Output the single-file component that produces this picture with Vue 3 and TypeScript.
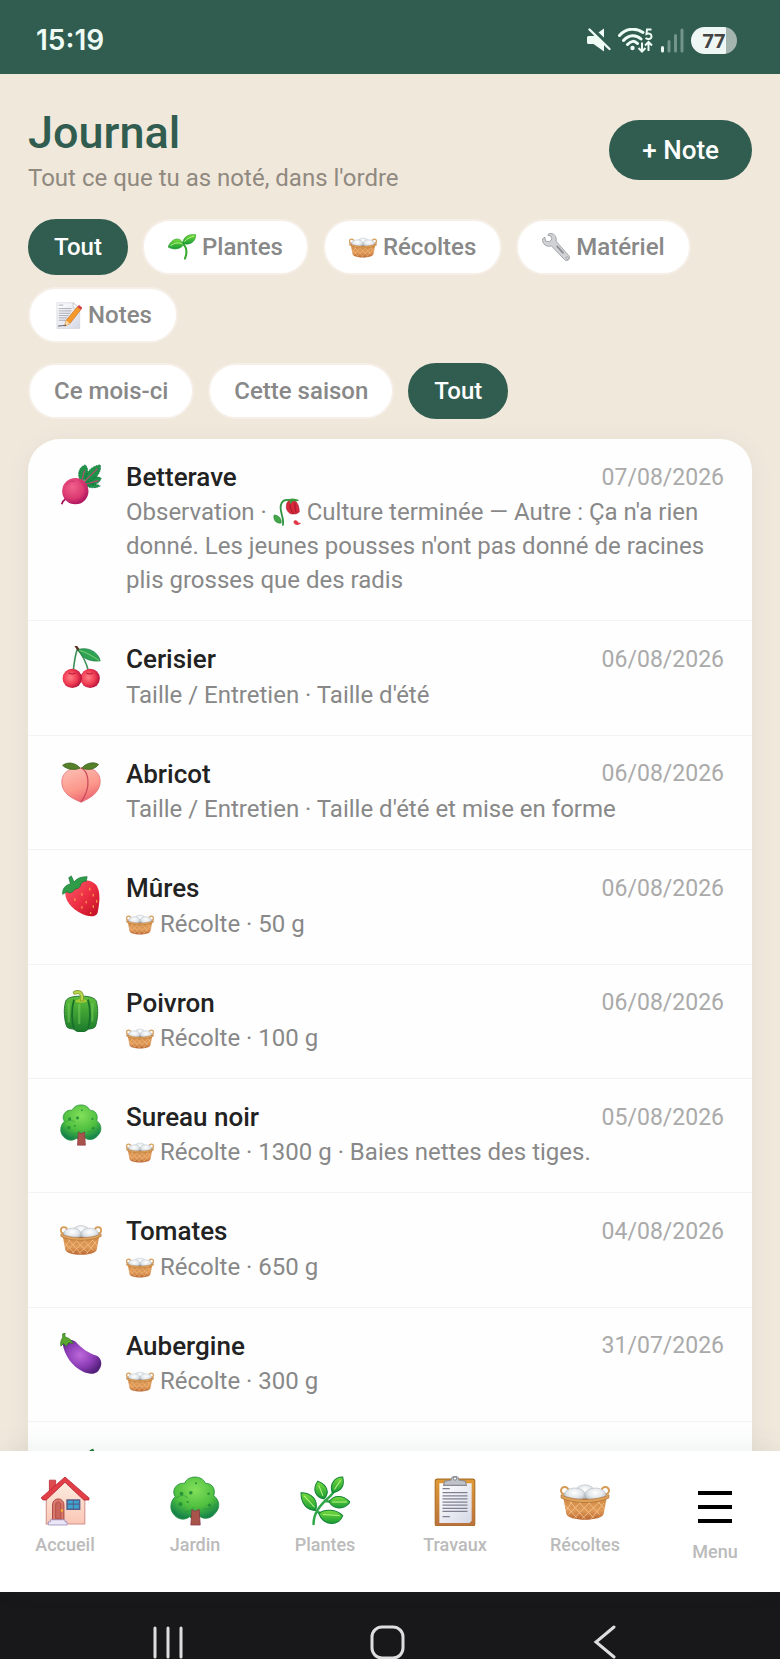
<script setup lang="ts">
import { ref } from 'vue'

interface Choice {
  id: string
  label: string
  icon?: string
}

interface Entry {
  icon: string
  name: string
  date: string
  before?: string
  inline?: string
  text: string
}

const kinds: Choice[] = [
  { id: 'all', label: 'Tout' },
  { id: 'plants', label: 'Plantes', icon: 'seedling' },
  { id: 'harvests', label: 'Récoltes', icon: 'basket' },
  { id: 'gear', label: 'Matériel', icon: 'wrench' },
  { id: 'notes', label: 'Notes', icon: 'memo' },
]

const periods: Choice[] = [
  { id: 'month', label: 'Ce mois-ci' },
  { id: 'season', label: 'Cette saison' },
  { id: 'all', label: 'Tout' },
]

const entries: Entry[] = [
  {
    icon: 'beet',
    name: 'Betterave',
    date: '07/08/2026',
    before: 'Observation · ',
    inline: 'rose',
    text: "Culture terminée — Autre : Ça n'a rien donné. Les jeunes pousses n'ont pas donné de racines plis grosses que des radis",
  },
  { icon: 'cherries', name: 'Cerisier', date: '06/08/2026', text: "Taille / Entretien · Taille d'été" },
  { icon: 'peach', name: 'Abricot', date: '06/08/2026', text: "Taille / Entretien · Taille d'été et mise en forme" },
  { icon: 'strawberry', name: 'Mûres', date: '06/08/2026', inline: 'basket', text: 'Récolte · 50 g' },
  { icon: 'pepper', name: 'Poivron', date: '06/08/2026', inline: 'basket', text: 'Récolte · 100 g' },
  { icon: 'tree', name: 'Sureau noir', date: '05/08/2026', inline: 'basket', text: 'Récolte · 1300 g · Baies nettes des tiges.' },
  { icon: 'basket', name: 'Tomates', date: '04/08/2026', inline: 'basket', text: 'Récolte · 650 g' },
  { icon: 'eggplant', name: 'Aubergine', date: '31/07/2026', inline: 'basket', text: 'Récolte · 300 g' },
]

const tabs: Choice[] = [
  { id: 'home', label: 'Accueil', icon: 'house' },
  { id: 'garden', label: 'Jardin', icon: 'tree' },
  { id: 'plants', label: 'Plantes', icon: 'herb' },
  { id: 'tasks', label: 'Travaux', icon: 'clipboard' },
  { id: 'harvests', label: 'Récoltes', icon: 'basket' },
]

const kind = ref('all')
const period = ref('all')
</script>

<template>
  <div class="screen">
    <svg class="sprite" aria-hidden="true">
      <defs>
        <radialGradient id="g-beet" cx=".4" cy=".35" r=".7"><stop offset="0" stop-color="#f0628c" /><stop offset=".6" stop-color="#dc3a72" /><stop offset="1" stop-color="#a80f5c" /></radialGradient>
        <radialGradient id="g-cherry" cx=".4" cy=".45" r=".6"><stop offset="0" stop-color="#ff7f85" /><stop offset=".6" stop-color="#f03c52" /><stop offset="1" stop-color="#b5123c" /></radialGradient>
        <linearGradient id="g-peach" x1="0" y1="0" x2=".4" y2="1"><stop offset="0" stop-color="#ffc3b8" /><stop offset=".7" stop-color="#fb9689" /><stop offset="1" stop-color="#ee6c74" /></linearGradient>
        <linearGradient id="g-straw" x1="0" y1="0" x2="1" y2="1"><stop offset="0" stop-color="#fb5d6c" /><stop offset=".5" stop-color="#ee3044" /><stop offset="1" stop-color="#bf0c22" /></linearGradient>
        <linearGradient id="g-pepper" x1="0" y1="0" x2="0" y2="1"><stop offset="0" stop-color="#5fc03c" /><stop offset="1" stop-color="#1a7a2c" /></linearGradient>
        <radialGradient id="g-tree" cx=".5" cy=".3" r=".7"><stop offset="0" stop-color="#83e05a" /><stop offset=".6" stop-color="#4fbf40" /><stop offset="1" stop-color="#15834a" /></radialGradient>
        <linearGradient id="g-wicker" x1="0" y1="0" x2="0" y2="1"><stop offset="0" stop-color="#cf8a45" /><stop offset=".6" stop-color="#e09a58" /><stop offset="1" stop-color="#b86732" /></linearGradient>
        <radialGradient id="g-egg" cx=".5" cy=".35" r=".7"><stop offset="0" stop-color="#ffffff" /><stop offset=".5" stop-color="#e3e8ec" /><stop offset="1" stop-color="#a5adb5" /></radialGradient>
        <radialGradient id="g-egpl" cx=".45" cy=".45" r=".6"><stop offset="0" stop-color="#bd69dc" /><stop offset=".6" stop-color="#8b3cb4" /><stop offset="1" stop-color="#54217c" /></radialGradient>
        <linearGradient id="g-leaf" x1="0" y1="0" x2="0" y2="1"><stop offset="0" stop-color="#78dc3c" /><stop offset="1" stop-color="#179b35" /></linearGradient>
        <linearGradient id="g-wall" x1="0" y1="0" x2="0" y2="1"><stop offset="0" stop-color="#fdeee0" /><stop offset="1" stop-color="#fbc6b5" /></linearGradient>
        <linearGradient id="g-board" x1="0" y1="0" x2="0" y2="1"><stop offset="0" stop-color="#e09a35" /><stop offset="1" stop-color="#b9713f" /></linearGradient>
        <linearGradient id="g-paper" x1="0" y1="0" x2="1" y2="1"><stop offset="0" stop-color="#ffffff" /><stop offset="1" stop-color="#d5d9e6" /></linearGradient>
      </defs>

      <symbol id="i-beet" viewBox="0 0 48 48">
        <path d="M9 37c-1 4-6 3-7 9" fill="none" stroke="#a3145c" stroke-width="2" />
        <path d="M24 20C19 13 21 3 29 1c5 5 2 13-3 19zM28 21C28 10 36 2 46 1c2 8-5 17-16 21zM29 23c5-8 12-10 18-7-1 6-9 10-18 7zM28 24c7-3 15-1 18 1-5 3-13 3-18-1z" fill="#1f9449" stroke="#0c6a3b" stroke-width=".8" stroke-dasharray="2 1" />
        <path d="M24 23L28 7M25 23L43 5M26 24l18-5" fill="none" stroke="#b64a72" stroke-width="1.400" />
        <circle cx="17.500" cy="31" r="15" fill="url(#g-beet)" />
        <path d="M22 19c4 2 7 7 7 12M7 24c3-4 6-5 10-4M25 40c2-1 4-4 5-7" fill="none" stroke="#b31b62" stroke-width=".8" opacity=".7" />
      </symbol>

      <symbol id="i-cherries" viewBox="0 0 48 48">
        <path d="M20 3C17 11 16 20 15 30M20 4c6 6 10 15 13 26" fill="none" stroke="#3c8f55" stroke-width="1.800" />
        <path d="M18 0l3 4" stroke="#5d2f20" stroke-width="2.600" stroke-linecap="round" />
        <path d="M21 4c9-3 22 1 25 13-10 1-20-1-25-13z" fill="#2fa352" stroke="#167542" stroke-width=".8" />
        <path d="M22 5c7 2 15 6 23 12" stroke="#8bd27a" stroke-width="1" fill="none" />
        <circle cx="34.500" cy="37" r="11" fill="url(#g-cherry)" />
        <circle cx="14" cy="37" r="11" fill="url(#g-cherry)" />
        <path d="M10 31q4 2 8 0M30 31q4 2 8 0" stroke="#a81035" fill="none" />
      </symbol>

      <symbol id="i-peach" viewBox="0 0 48 48">
        <path d="M24 8C16 6 2 11 2 24c0 13 12 19 22 23 12-5 22-12 22-24C46 10 32 6 24 8z" fill="url(#g-peach)" stroke="#df6770" stroke-width=".8" />
        <path d="M24 8c8 3 13 21 0 39" fill="none" stroke="#ca4b5d" stroke-width="1.500" />
        <path d="M23 8C17 1 8 1 3 5c5 5 14 6 20 3zM25 8c6-7 15-7 19-4-4 6-13 7-19 4z" fill="#54802a" stroke="#335d1b" stroke-width=".8" />
      </symbol>

      <symbol id="i-strawberry" viewBox="0 0 48 48">
        <path d="M6 21C10 10 26 3 37 8c10 5 9 20 6 35-2 5-8 5-14 3C18 42 6 32 6 21z" fill="url(#g-straw)" />
        <path d="M10 3l3-2 3 7c4-5 9-6 15-6l-1 5c-3 0-5 1-6 3-1 4-3 6-7 6-3 5-6 5-9 3l-5 3c0-6 2-10 9-12z" fill="#2f9c47" stroke="#177338" stroke-width=".8" />
        <path d="M34 15v2M25 21v2M38 22v2M17 27v2M30 30v2M38 35v2M25 36v2M35 43v1M42 29v2" stroke="#ff9d4f" stroke-width="1.400" stroke-linecap="round" />
      </symbol>

      <symbol id="i-pepper" viewBox="0 0 48 48">
        <path d="M6 15c0-6 8-8 18-8s18 2 18 8c2 8 1 18-1 25-1 5-7 4-9 5-4 4-12 4-16 0-2-1-8 0-9-5C5 33 4 23 6 15z" fill="url(#g-pepper)" stroke="#176829" stroke-width="1" />
        <path d="M16 11c-3 10-3 24 0 33M32 11c3 10 3 24 0 33" stroke="#186f2a" stroke-width="2" fill="none" />
        <path d="M10 16v20M22 17v21M37 16v19" stroke="#8be267" stroke-width="2.500" stroke-linecap="round" opacity=".4" />
        <path d="M17 13c4 2 10 2 14 0-2-4-10-4-14 0z" fill="#a4c936" />
        <path d="M25 11c1-7-2-10-8-8" fill="none" stroke="#7d9d27" stroke-width="4.500" stroke-linecap="round" />
        <path d="M25 11c1-7-2-10-8-8" fill="none" stroke="#bbd651" stroke-width="2.500" stroke-linecap="round" />
      </symbol>

      <symbol id="i-tree" viewBox="0 0 48 48">
        <path d="M14 7C17-1 31-1 34 7c7 0 10 6 8 12 6 4 6 12 2 16-4 6-11 7-15 4-4 3-8 3-10 0-5 4-12 3-16-3-4-5-2-13 2-16C1 14 6 6 14 7z" fill="url(#g-tree)" stroke="#248f3e" stroke-width=".8" />
        <path d="M20 47l1-15 3 2 4-2 1 15z" fill="#a9544b" stroke="#8a3a48" stroke-width=".8" />
        <path d="M6 21c4-3 8-3 11 0M32 31c5 2 9 0 12-4M14 34c4 1 7-1 9-4" fill="none" stroke="#24943b" opacity=".55" />
        <g fill="#279339"><circle cx="11" cy="17" r="1.800" /><circle cx="20" cy="16" r="1.700" /><circle cx="10" cy="27" r="2" /><circle cx="37" cy="17" r="1.200" /><circle cx="38" cy="28" r="1.700" /><circle cx="25" cy="7" r="1" /><circle cx="17" cy="25" r="1" /></g>
      </symbol>

      <symbol id="i-basket" viewBox="0 0 48 48">
        <circle cx="4.500" cy="14" r="3.500" fill="none" stroke="#d59b55" stroke-width="2" />
        <circle cx="43.500" cy="14" r="3.500" fill="none" stroke="#d59b55" stroke-width="2" />
        <ellipse cx="24" cy="20" rx="21" ry="5" fill="#a5612c" />
        <ellipse cx="24" cy="15" rx="9" ry="6.500" fill="url(#g-egg)" stroke="#a9b1b8" stroke-width=".5" />
        <ellipse cx="14" cy="18" rx="10" ry="6.500" fill="url(#g-egg)" stroke="#a9b1b8" stroke-width=".5" />
        <ellipse cx="34" cy="18" rx="10" ry="6.500" fill="url(#g-egg)" stroke="#a9b1b8" stroke-width=".5" />
        <path d="M3 20c11 5 31 5 42 0l-3 16c-1 8-35 8-36 0z" fill="url(#g-wicker)" />
        <path d="M5 28l11 12M9 24l15 17M18 25l14 15M27 25l11 12M36 24l7 8M42 26L30 41M38 25L21 41M29 25L14 40M20 25L8 37M12 24l-6 9" stroke="#f8c48e" stroke-width=".8" fill="none" />
        <path d="M1 18c11 6 35 6 46 0v3c-11 6-35 6-46 0z" fill="#dfa25c" stroke="#a9682f" stroke-width=".6" />
      </symbol>

      <symbol id="i-eggplant" viewBox="0 0 48 48">
        <path d="M3 12C8 7 14 7 18 10c7 8 15 13 24 16 6 3 7 11 2 17-4 5-12 4-18 1C14 38 5 26 3 12z" fill="url(#g-egpl)" />
        <path d="M3 1l3-1c-1 3 0 4 1 5 4 1 6 3 8 7l-5-1-3 4-3-3-3 3C0 10 2 7 3 5z" fill="#59a52e" stroke="#2f7621" stroke-width=".8" />
      </symbol>

      <symbol id="i-carrot" viewBox="0 0 48 48">
        <path d="M31 17C29 8 33 3 38 2l2 5c4-2 7-1 8 2-1 6-9 9-17 8z" fill="#1d7c32" />
        <path d="M3 46C7 31 15 16 25 12c7-1 14 6 11 13C32 34 18 43 3 46z" fill="#f28b2d" />
      </symbol>

      <symbol id="i-house" viewBox="0 0 48 48">
        <path d="M9 16V4h6v10z" fill="#e04a4c" stroke="#b9323c" stroke-width=".8" />
        <path d="M6 20L24 5l19 16v25H6z" fill="url(#g-wall)" stroke="#cf8f8b" stroke-width="1" />
        <path d="M24 1L1 21l2 2h3L24 6l18 17h5v-2z" fill="#e23e46" stroke="#b82334" stroke-width=".8" stroke-linejoin="round" />
        <path d="M12 42V28c0-8 11-8 11 0v14z" fill="#d8796c" stroke="#9e3b3c" stroke-width=".8" />
        <path d="M15 41V28c0-4 5-4 5 0v13z" fill="#c9655b" stroke="#a8483f" stroke-width=".7" />
        <circle cx="21" cy="33" r="1.200" fill="#f5b928" />
        <path d="M10 42h14v2h2v3H8v-3h2z" fill="#ece7f6" stroke="#9a8ebb" stroke-width=".8" />
        <path d="M26 23h12v9H26z" fill="#3ba5d2" stroke="#565f8a" stroke-width="1.500" />
        <path d="M32 23v9M26 27h12" stroke="#565f8a" stroke-width="1" />
      </symbol>

      <symbol id="i-herb" viewBox="0 0 48 48">
        <path d="M13 46c0-11 7-18 12-23 5-4 8-7 10-13M24 24l9 1M18 35l4 1" fill="none" stroke="#2da747" stroke-width="2.400" stroke-linecap="round" />
        <g fill="url(#g-leaf)" stroke="#14813a" stroke-width="1">
          <path d="M31 16C28 8 33 1 41 1c2 8-1 14-10 15z" />
          <path d="M23 22C14 20 12 12 17 5c9 3 12 11 6 17z" />
          <path d="M15 33C6 33 1 26 1 16c10 0 17 7 14 17z" />
          <path d="M28 25c4-7 13-7 20 0-5 7-15 8-20 0z" />
          <path d="M18 36c6-5 17-4 23 2-3 10-18 11-23-2z" />
        </g>
        <path d="M33 13l6-9M22 19L18 9M14 30L4 19M31 25h14M22 37l16 1" stroke="#b5f584" stroke-width="1" />
      </symbol>

      <symbol id="i-clipboard" viewBox="0 0 48 48">
        <rect x="5" y="3" width="38" height="45" rx="2" fill="url(#g-board)" stroke="#a96b1e" stroke-width="1" />
        <path d="M9 7h31v36l-2 2H9z" fill="url(#g-paper)" />
        <path d="M12 12h7M12 16h24M12 19h24M12 22h24M12 25h24M12 28h24M12 31h24M12 34h24M12 39h7" stroke="#7f8092" stroke-width="1.200" />
        <path d="M13 9l1-4 6-1c1-5 7-5 8 0l6 1 1 4z" fill="#bec1c8" stroke="#888b94" stroke-width="1" />
        <circle cx="24" cy="2.500" r="1.500" fill="#fff" stroke="#888b94" />
      </symbol>

      <symbol id="i-seedling" viewBox="0 0 48 48">
        <path d="M29 44C33 34 32 24 25 18" fill="none" stroke="#37a92d" stroke-width="3.500" stroke-linecap="round" />
        <path d="M27 20C21 5 7 8 0 24c9 5 20 5 27-4z" fill="url(#g-leaf)" stroke="#26932c" />
        <path d="M25 18C27 4 37 2 48 3c-1 12-10 19-23 15z" fill="url(#g-leaf)" stroke="#26932c" />
        <path d="M4 22c8-6 15-6 21-3M28 15C33 9 39 7 45 5" stroke="#baf68a" stroke-width="1.500" fill="none" />
      </symbol>

      <symbol id="i-wrench" viewBox="0 0 48 48">
        <path d="M12 1c8-2 14 5 12 13l22 25c4 5-3 11-7 7L16 22C8 25 0 19 1 10l4-3 1 7 7 1 4-5-2-5-5-1z" fill="#d0d2d4" stroke="#999ca1" stroke-width="1.500" stroke-linejoin="round" />
        <path d="M26 23l10 11" stroke="#8b8e94" stroke-width="3" stroke-linecap="round" />
        <circle cx="43" cy="43" r="2" fill="#fff" stroke="#777b82" />
      </symbol>

      <symbol id="i-memo" viewBox="0 0 48 48">
        <path d="M5 3h28l11 10v34H5z" fill="url(#g-paper)" stroke="#c9cbd4" />
        <path d="M33 3v9l11 1z" fill="#fff" stroke="#aaadb8" />
        <path d="M8 7h8M8 13h22M8 17h22M8 21h20M8 25h17M8 29h15M8 33h13" stroke="#9698a4" stroke-width="1.300" />
        <path d="M7 43q9-1 13-1" stroke="#4c4c55" stroke-width="1.500" fill="none" />
        <path d="M18 43l3-10L40 10l6 5-19 24z" fill="#f59a2a" stroke="#c7661b" />
        <path d="M40 10l3-3 6 5-3 3z" fill="#d6414b" />
        <path d="M18 43l3-10 6 6z" fill="#f7d6a8" />
        <path d="M18 43l1-3 2 2z" fill="#333" />
      </symbol>

      <symbol id="i-rose" viewBox="0 0 48 48">
        <path d="M17 46C20 32 8 20 15 8 18 3 26 2 31 5" fill="none" stroke="#329545" stroke-width="3.200" stroke-linecap="round" />
        <path d="M14 43C4 44 0 36 2 29c8 1 13 6 12 14z" fill="#43a845" stroke="#217b38" />
        <path d="M23 18C22 8 26 3 32 4c8-1 13 8 13 20-4 3-6 4-9 3-5 2-11-2-13-9z" fill="#d62839" stroke="#a51430" />
        <path d="M29 11c0 7 3 12 7 16M38 9c-1 6 0 12 2 16" stroke="#94142c" stroke-width="1.500" fill="none" />
        <path d="M24 5c5-6 13-5 21-1l-5 2-3-1-4 1-3 5-2-7z" fill="#3a9a3e" />
        <path d="M35 41c3-5 7-2 8 1l5 1c-3 4-11 5-13-2z" fill="#e13746" />
      </symbol>
    </svg>

    <header class="status">
      <time class="clock">15:19</time>
      <div class="signals">
        <svg class="mute" viewBox="0 0 24 24" aria-hidden="true">
          <path d="M1.500 8h5L17 .500v23L6.500 16h-5Q0 16 0 14.500v-5Q0 8 1.500 8z" fill="currentColor" />
          <path d="M3 -1L23 18" class="cut" />
          <path d="M2.500 1.500L22.500 21" stroke="currentColor" stroke-width="2.400" stroke-linecap="round" />
        </svg>
        <svg class="wifi" viewBox="0 0 35 25" aria-hidden="true">
          <g fill="none" stroke="currentColor" stroke-width="3" stroke-linecap="round">
            <path d="M1.500 7.500C8 0 18-.5 25 4.500M5.500 12.500C11 6.500 18 6.500 23 11M9.500 16.500c4-4 7-4 10-1" />
          </g>
          <circle cx="14.500" cy="20" r="2.200" fill="currentColor" />
          <g fill="none" stroke="currentColor" stroke-width="2">
            <path d="M33.500 1.500H29L28.500 6C31 5 33.500 6 33.500 8.500c0 3-4 3-6 1.500M24 14.500v9m-3.500-3.500l3.500 3.500 3.500-3.500M30.500 23v-9M27 17.500l3.500-3.500 3.500 3.500" />
          </g>
        </svg>
        <svg class="bars" viewBox="0 0 24 25" aria-hidden="true">
          <g stroke="currentColor" stroke-width="3" stroke-linecap="round">
            <path d="M2.500 19.500v3.500" />
            <path d="M9 13.500V23M15.500 7.500V23M22 2v21" opacity=".35" />
          </g>
        </svg>
        <span class="battery">77</span>
      </div>
    </header>

    <main class="content">
      <div class="heading">
        <div>
          <h1>Journal</h1>
          <p>Tout ce que tu as noté, dans l'ordre</p>
        </div>
        <button type="button" class="add">+ Note</button>
      </div>

      <div class="chips" role="group" aria-label="Type">
        <button v-for="c in kinds" :key="c.id" type="button" class="chip" :class="{ on: kind === c.id }" :aria-pressed="kind === c.id" @click="kind = c.id">
          <svg v-if="c.icon" class="small" aria-hidden="true"><use :href="'#i-' + c.icon" /></svg>
          <span>{{ c.label }}</span>
        </button>
      </div>

      <div class="chips" role="group" aria-label="Période">
        <button v-for="c in periods" :key="c.id" type="button" class="chip" :class="{ on: period === c.id }" :aria-pressed="period === c.id" @click="period = c.id">
          <span>{{ c.label }}</span>
        </button>
      </div>

      <ul class="card">
        <li v-for="e in entries" :key="e.name" class="row">
          <span class="picture">
            <svg class="medium" aria-hidden="true"><use :href="'#i-' + e.icon" /></svg>
          </span>
          <div class="body">
            <div class="top">
              <h2>{{ e.name }}</h2>
              <time>{{ e.date }}</time>
            </div>
            <p>{{ e.before }}<svg v-if="e.inline" class="small" aria-hidden="true"><use :href="'#i-' + e.inline" /></svg>{{ e.inline ? ' ' + e.text : e.text }}</p>
          </div>
        </li>
        <li class="row">
          <span class="picture">
            <svg class="medium" aria-hidden="true"><use href="#i-carrot" /></svg>
          </span>
        </li>
      </ul>
    </main>

    <nav class="tabs" aria-label="Navigation principale">
      <a v-for="t in tabs" :key="t.id" :href="'#' + t.id" class="tab">
        <svg class="large" aria-hidden="true"><use :href="'#i-' + t.icon" /></svg>
        <span>{{ t.label }}</span>
      </a>
      <button type="button" class="tab menu">
        <svg class="burger" viewBox="0 0 34 34" aria-hidden="true"><path d="M0 3h34M0 17h34M0 31h34" stroke="#000" stroke-width="4" /></svg>
        <span>Menu</span>
      </button>
    </nav>

    <footer class="system">
      <button type="button" aria-label="Applications récentes">
        <svg viewBox="0 0 36 36" aria-hidden="true"><path d="M4 4v29M17 4v29M30 4v29" /></svg>
      </button>
      <button type="button" aria-label="Écran d'accueil">
        <svg viewBox="0 0 36 36" aria-hidden="true"><rect x="3" y="3" width="31" height="31" rx="10" /></svg>
      </button>
      <button type="button" aria-label="Retour">
        <svg viewBox="0 0 36 36" aria-hidden="true"><path d="M27 3L9 18l18 15" /></svg>
      </button>
    </footer>
  </div>
</template>

<style>
body {
  margin: 0;
  background: #f1e8dc;
}
</style>

<style scoped>
.screen {
  display: flex;
  flex-direction: column;
  height: 100vh;
  overflow: hidden;
  background: #f1e8dc;
  font-family: Roboto, "Liberation Sans", sans-serif;
  color: #222;
}
.sprite {
  position: absolute;
  width: 0;
  height: 0;
}
button {
  font: inherit;
  border: 0;
  cursor: pointer;
}
h1, h2, p, ul {
  margin: 0;
  padding: 0;
}
.status {
  flex: none;
  display: flex;
  align-items: center;
  justify-content: space-between;
  height: 74px;
  padding: 6px 43px 0 36px;
  box-sizing: border-box;
  background: #305d4f;
  color: #eefcf5;
}
.clock {
  font: 600 28px/32px Inter, sans-serif;
}
.signals {
  display: flex;
  align-items: center;
  gap: 7px;
}
.mute { width: 24px; height: 24px; }
.cut { stroke: #305d4f; stroke-width: 4; }
.wifi { width: 35px; height: 25px; }
.bars { width: 24px; height: 25px; }
.battery {
  width: 46px;
  height: 27px;
  border-radius: 14px;
  background: linear-gradient(90deg, #eef7f3 76%, #a3b5ae 76%);
  color: #444;
  font: 700 20px/27px "Open Sans", sans-serif;
  text-align: center;
}
.content {
  flex: 1;
  min-height: 0;
  overflow: hidden;
  display: flex;
  flex-direction: column;
  gap: 20px;
  padding: 31px 28px 0;
}
.heading {
  display: flex;
  align-items: center;
  justify-content: space-between;
  margin-bottom: 4px;
}
h1 {
  font-size: 45px;
  line-height: 56px;
  font-weight: 500;
  color: #305d4f;
}
.heading p {
  font-size: 24px;
  line-height: 34px;
  color: #8f897f;
}
.add {
  height: 60px;
  padding: 0 33px;
  border-radius: 30px;
  background: #305d4f;
  color: #fff;
  font-size: 26px;
  font-weight: 500;
}
.chips {
  display: flex;
  flex-wrap: wrap;
  gap: 12px 14px;
}
.chip {
  display: flex;
  align-items: center;
  gap: 6px;
  height: 56px;
  padding: 0 24px;
  border: 2px solid #f5efe7;
  border-radius: 28px;
  background: #fff;
  color: #888;
  font-size: 24px;
  font-weight: 500;
}
.chip.on {
  border-color: #305d4f;
  background: #305d4f;
  color: #fff;
}
.small {
  width: 28px;
  height: 28px;
  vertical-align: -6px;
}
.medium { width: 42px; height: 42px; }
.large { width: 50px; height: 50px; }
.card {
  flex: none;
  list-style: none;
  border-radius: 32px 32px 0 0;
  background: #fefefe;
  box-shadow: 0 4px 24px rgba(48, 93, 79, 0.07);
}
.row {
  display: flex;
  gap: 20px;
  padding: 20px 28px 23px;
  border-bottom: 1px solid #f2f3f2;
}
.picture {
  flex: none;
  display: flex;
  justify-content: center;
  width: 50px;
  padding-top: 5px;
}
.body {
  flex: 1;
  min-width: 0;
}
.top {
  display: flex;
  align-items: center;
  justify-content: space-between;
}
h2 {
  font-size: 26px;
  line-height: 1.4;
  font-weight: 500;
}
.top time {
  font-size: 23px;
  color: #aaa;
}
.body p {
  font-size: 24px;
  line-height: 34px;
  color: #888;
}
.tabs {
  flex: none;
  z-index: 1;
  display: grid;
  grid-template-columns: repeat(6, 1fr);
  height: 141px;
  background: #fff;
  box-shadow: 0 -4px 24px rgba(48, 93, 79, 0.08);
}
.tab {
  display: flex;
  flex-direction: column;
  align-items: center;
  gap: 7px;
  padding: 25px 0 0;
  background: none;
  color: #bbb;
  font-size: 18px;
  line-height: 24px;
  font-weight: 500;
  text-decoration: none;
}
.menu {
  gap: 16px;
  padding-top: 39px;
}
.burger { width: 34px; height: 34px; }
.system {
  flex: none;
  display: flex;
  justify-content: center;
  gap: 182px;
  height: 67px;
  box-sizing: border-box;
  padding: 32px 6px 0 0;
  background: #18181a;
}
.system button {
  padding: 0;
  width: 36px;
  height: 36px;
  background: none;
}
.system svg {
  width: 36px;
  height: 36px;
  fill: none;
  stroke: #dedee0;
  stroke-width: 3;
  stroke-linecap: round;
}
</style>
